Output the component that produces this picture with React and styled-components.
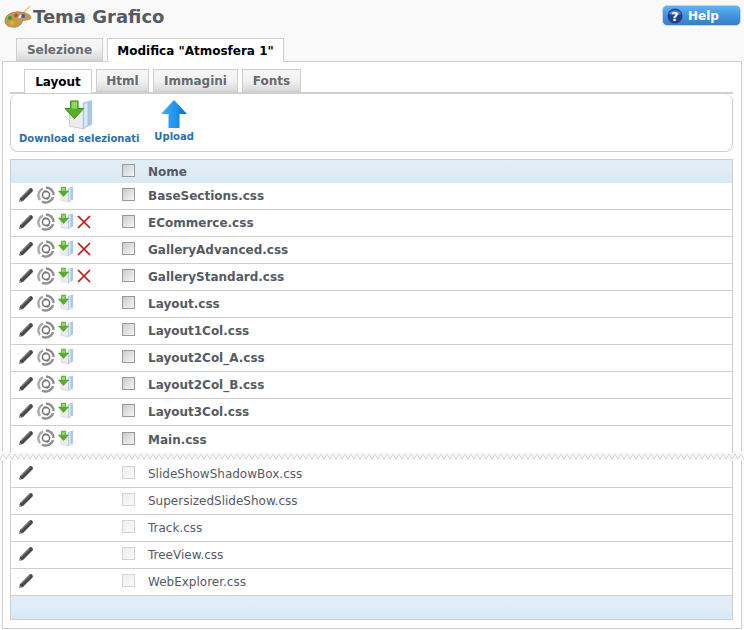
import React from 'react';
import styled, { createGlobalStyle } from 'styled-components';

const GlobalStyle = createGlobalStyle`
  html, body {
    margin: 0;
    padding: 0;
    background: #f9f9f9;
    font-family: "DejaVu Sans", Verdana, sans-serif;
  }
`;

const Page = styled.div`
  width: 744px;
  height: 630px;
  overflow: hidden;
`;

const Header = styled.header`
  display: flex;
  align-items: flex-start;
  justify-content: space-between;
  height: 38px;
  padding: 5px 3px 0 4px;
  box-sizing: border-box;
`;

const Title = styled.h1`
  display: flex;
  align-items: center;
  gap: 1px;
  margin: 0;
  font-size: 18px;
  line-height: 22px;
  font-weight: bold;
  color: #555a63;
`;

const HelpButton = styled.button`
  display: flex;
  align-items: center;
  gap: 5px;
  width: 79px;
  height: 21px;
  padding: 0 0 0 4px;
  box-sizing: border-box;
  border: 1px solid #c4d4e0;
  border-radius: 5px;
  background: linear-gradient(#5fb4f0, #3f93dc 55%, #3a7fc0);
  color: #fff;
  font: bold 12px "DejaVu Sans", sans-serif;
`;

const TabRow = styled.div`
  display: flex;
  align-items: flex-end;
  gap: ${p => p.$gap}px;
  height: ${p => p.$height}px;
  padding-left: ${p => p.$left}px;
  box-sizing: border-box;
`;

const Tab = styled.div`
  display: flex;
  align-items: center;
  justify-content: center;
  box-sizing: border-box;
  width: ${p => p.$width}px;
  height: ${p => (p.$active ? p.$height + 1 : p.$height)}px;
  margin-bottom: ${p => (p.$active ? -1 : 0)}px;
  position: relative;
  border: 1px solid #cfcfcf;
  border-bottom: ${p => (p.$active ? 'none' : '1px solid #cfcfcf')};
  font-size: 12px;
  font-weight: bold;
  color: ${p => (p.$active ? '#000' : '#666a70')};
  background: ${p => (p.$active ? '#fff' : 'linear-gradient(#f6f6f6, #f2f2f2 50%, #d8d8d8)')};
`;

const PanelTop = styled.div`
  margin: 0 2px 0 2px;
  height: 390px;
  padding: 7px 8px 0 7px;
  box-sizing: border-box;
  background: #fff;
  border: 1px solid #cfcfcf;
  border-bottom: none;
`;

const InnerTabs = styled.div`
  border-bottom: 2px solid #cfcfcf;
  margin-bottom: 0;
`;

const Toolbar = styled.div`
  display: flex;
  height: 58px;
  box-sizing: border-box;
  padding: 5px 0 0 8px;
  gap: 15px;
  border: 1px solid #cfcfcf;
  border-top: none;
  border-radius: 0 0 8px 8px;
  border-top-right-radius: 8px;
  border-top-left-radius: 8px;
  margin-bottom: 7px;
`;

const ToolButton = styled.div`
  display: flex;
  flex-direction: column;
  align-items: center;
  gap: 2px;
  font-size: 10px;
  line-height: 12px;
  font-weight: bold;
  color: #2f6fa8;
  white-space: nowrap;
`;

const Table = styled.div`
  border: 1px solid #cfcfcf;
  border-bottom: none;
  background: #fff;
`;

const TableHead = styled.div`
  display: flex;
  align-items: center;
  height: 23px;
  background: linear-gradient(#e2edf6, #dfecf6 50%, #d7e8f5);
`;

const Row = styled.div`
  display: flex;
  align-items: center;
  height: 27px;
  box-sizing: border-box;
  border-bottom: 1px solid #cfcfcf;
`;

const Actions = styled.div`
  display: flex;
  align-items: center;
  gap: 3px;
  width: 111px;
  padding: 0 0 3px 7px;
  box-sizing: border-box;
`;

const CheckCell = styled.div`
  display: flex;
  width: 26px;
  padding-bottom: 3px;
`;

const Check = styled.span`
  display: block;
  width: 13px;
  height: 13px;
  box-sizing: border-box;
  border: 1px solid ${p => (p.$off ? '#d4d4d4' : '#9a9a9a')};
  background: ${p => (p.$off ? 'linear-gradient(135deg, #eee, #fbfbfb)' : 'linear-gradient(135deg, #ccc, #f6f6f6)')};
`;

const Name = styled.div`
  font-size: 12px;
  font-weight: ${p => (p.$plain ? 'normal' : 'bold')};
  color: #555a63;
`;

const Tear = styled.svg`
  display: block;
  width: 744px;
  height: 10px;
  margin: 0;
`;

const PanelBottom = styled.div`
  margin: 0 2px;
  height: 168px;
  padding: 0 8px 0 7px;
  box-sizing: border-box;
  background: #fff;
  border: 1px solid #cfcfcf;
  border-top: none;
`;

const TableBottom = styled(Table)`
  border-top: none;
  border-bottom: 1px solid #cfcfcf;
`;

const TableFoot = styled.div`
  height: 23px;
  background: linear-gradient(#e2edf6, #dfecf6 50%, #d7e8f5);
`;

const Pencil = () => (
  <svg width="16" height="16" viewBox="0 0 16 16">
    <path d="M1 15 L2 11 L11.5 1.5 Q13 0.5 14.5 2 Q15.5 3.5 14.5 4.5 L5 14 Z" fill="#4a4a4a" />
    <path d="M3 11 L12 2.5" stroke="#8a8a8a" strokeWidth="1" />
    <path d="M1 15 L1.7 12.4 L3.6 14.3 Z" fill="#b5b5b5" />
  </svg>
);

const Swirl = () => (
  <svg width="18" height="18" viewBox="0 0 18 18" fill="none">
    <path d="M9 1.5 A7.5 7.5 0 0 1 16.5 9" stroke="#8f8f8f" strokeWidth="2.4" />
    <path d="M16 11 A7.5 7.5 0 0 1 5 15.5" stroke="#8f8f8f" strokeWidth="2.4" />
    <path d="M3 14 A7.5 7.5 0 0 1 6 2.5" stroke="#a8a8a8" strokeWidth="2.4" />
    <circle cx="9" cy="9" r="3.6" stroke="#777" strokeWidth="1.6" />
    <path d="M6 5.5 L8.5 4 L9 6.5 Z M13 12 L10 14 L9.5 11.5 Z" fill="#777" />
  </svg>
);

const FolderDown = ({ size = 16, h = 17 }) => (
  <svg width={size} height={h} viewBox="0 0 16 17">
    <path d="M3 6 L11 5 L11 16 L3 14.5 Z" fill="#ececec" stroke="#c9c9c9" strokeWidth="0.5" />
    <path d="M10 2 L15 0.5 L15 13.5 L10 16 Z" fill="#a9c8e6" />
    <path d="M10.8 2.6 L12.5 2 L12.5 14 L10.8 15 Z" fill="#dceaf6" />
    <path d="M3.5 1 L7.5 1 L7.5 5 L10.5 5 L5.5 10.5 L0.5 5 L3.5 5 Z" fill="#58b02a" stroke="#3c8a16" strokeWidth="0.5" />
    <path d="M4 1.5 L7 1.5 L7 5 L4 5 Z" fill="#8fd95a" />
  </svg>
);

const Cross = () => (
  <svg width="14" height="14" viewBox="0 0 14 14">
    <path d="M1 1 L13 13 M13 1 L1 13" stroke="#cc1111" strokeWidth="1.7" />
  </svg>
);

const Palette = () => (
  <svg width="28" height="24" viewBox="0 0 28 24">
    <path d="M26 1 L17 10" stroke="#e8d070" strokeWidth="1.6" />
    <path d="M1 16 C1 9 9 6 17 7 C25 8 29 12 26 14 C23 16 19 14 18 17 C17 21 12 23 8 22 C4 21.5 1 20 1 16 Z" fill="#c49a4e" stroke="#97743a" strokeWidth="0.6" />
    <circle cx="6" cy="13" r="2.1" fill="#2f9a3a" />
    <circle cx="12" cy="10.5" r="2.1" fill="#d24a25" />
    <circle cx="19" cy="11" r="2.1" fill="#2a5fc0" />
    <circle cx="8" cy="18" r="2.1" fill="#e8b02a" />
    <path d="M17 10 L15 13" stroke="#fff" strokeWidth="2" />
  </svg>
);

const HelpIcon = () => (
  <svg width="16" height="16" viewBox="0 0 16 16">
    <circle cx="8" cy="8" r="7.5" fill="#1f3f8f" />
    <path d="M2 6 A6.5 6 0 0 1 14 6 A8 3 0 0 1 2 6 Z" fill="#5f84c8" />
    <text x="8" y="12.5" fontSize="12.5" fontWeight="bold" fill="#fff" textAnchor="middle" fontFamily="DejaVu Sans, sans-serif">?</text>
  </svg>
);

const DownloadBig = () => <FolderDown size={30} h={32} />;

const UploadBig = () => (
  <svg width="28" height="30" viewBox="0 0 28 30">
    <defs>
      <linearGradient id="up" x1="0" x2="1" y1="0" y2="0">
        <stop offset="0" stopColor="#3fb0f5" />
        <stop offset="0.6" stopColor="#1e90f0" />
        <stop offset="1" stopColor="#0a62c8" />
      </linearGradient>
    </defs>
    <path d="M14 1 L27 15 L19.5 15 L19.5 29 L8.5 29 L8.5 15 L1 15 Z" fill="url(#up)" />
  </svg>
);

const topFiles = [
  ['BaseSections.css', false],
  ['ECommerce.css', true],
  ['GalleryAdvanced.css', true],
  ['GalleryStandard.css', true],
  ['Layout.css', false],
  ['Layout1Col.css', false],
  ['Layout2Col_A.css', false],
  ['Layout2Col_B.css', false],
  ['Layout3Col.css', false],
  ['Main.css', false],
];

const bottomFiles = ['SlideShowShadowBox.css', 'SupersizedSlideShow.css', 'Track.css', 'TreeView.css', 'WebExplorer.css'];

const outerTabs = [
  { label: 'Selezione', width: 87 },
  { label: 'Modifica "Atmosfera 1"', width: 177, active: true },
];

const innerTabs = [
  { label: 'Layout', width: 68, active: true },
  { label: 'Html', width: 53 },
  { label: 'Immagini', width: 85 },
  { label: 'Fonts', width: 59 },
];

const zigzag = Array.from({ length: 125 }, (_, i) => `${i * 6},8 ${i * 6 + 3},3`).join(' ');

export default function App() {
  return (
    <Page>
      <GlobalStyle />
      <Header>
        <Title><Palette />Tema Grafico</Title>
        <HelpButton><HelpIcon />Help</HelpButton>
      </Header>
      <TabRow $gap={4} $height={23} $left={16}>
        {outerTabs.map(t => (
          <Tab key={t.label} $width={t.width} $height={23} $active={t.active}>{t.label}</Tab>
        ))}
      </TabRow>
      <PanelTop>
        <InnerTabs>
          <TabRow $gap={4} $height={23} $left={14}>
            {innerTabs.map(t => (
              <Tab key={t.label} $width={t.width} $height={23} $active={t.active}>{t.label}</Tab>
            ))}
          </TabRow>
        </InnerTabs>
        <Toolbar>
          <ToolButton><DownloadBig />Download selezionati</ToolButton>
          <ToolButton><UploadBig />Upload</ToolButton>
        </Toolbar>
        <Table>
          <TableHead>
            <Actions />
            <CheckCell><Check /></CheckCell>
            <Name>Nome</Name>
          </TableHead>
          {topFiles.map(([name, removable], i) => (
            <Row key={name} style={i === topFiles.length - 1 ? { borderBottom: 'none' } : undefined}>
              <Actions>
                <Pencil />
                <Swirl />
                <FolderDown />
                {removable && <Cross />}
              </Actions>
              <CheckCell><Check /></CheckCell>
              <Name>{name}</Name>
            </Row>
          ))}
        </Table>
      </PanelTop>
      <Tear viewBox="0 0 744 10">
        <polyline points={zigzag} fill="none" stroke="#d8d8d8" strokeWidth="1" />
      </Tear>
      <PanelBottom>
        <TableBottom>
          {bottomFiles.map(name => (
            <Row key={name}>
              <Actions><Pencil /></Actions>
              <CheckCell><Check $off /></CheckCell>
              <Name $plain>{name}</Name>
            </Row>
          ))}
          <TableFoot />
        </TableBottom>
      </PanelBottom>
    </Page>
  );
}
